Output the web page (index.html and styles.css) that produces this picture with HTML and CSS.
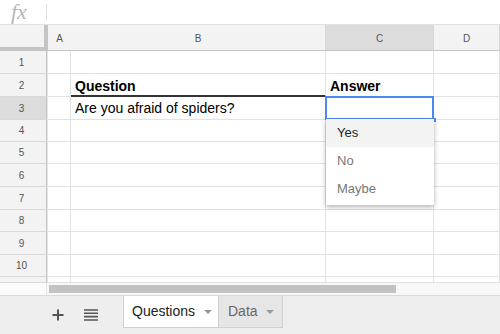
FILE: index.html
```html
<!DOCTYPE html>
<html lang="en">
<head>
  <meta charset="UTF-8">
  <title>Sheet</title>
  <link rel="stylesheet" href="styles.css">
</head>
<body>
  <div class="formula-bar">
    <span class="fx">fx</span>
    <span class="fx-sep"></span>
  </div>

  <div class="grid">
    <div class="corner"></div>
    <div class="col-head">A</div>
    <div class="col-head">B</div>
    <div class="col-head active">C</div>
    <div class="col-head">D</div>

    <div class="row-head">1</div>
    <div class="cell"></div><div class="cell"></div><div class="cell"></div><div class="cell"></div>

    <div class="row-head">2</div>
    <div class="cell"></div>
    <div class="cell bold underline">Question</div>
    <div class="cell bold">Answer</div>
    <div class="cell"></div>

    <div class="row-head active">3</div>
    <div class="cell"></div>
    <div class="cell">Are you afraid of spiders?</div>
    <div class="cell selected"><span class="handle"></span></div>
    <div class="cell"></div>

    <div class="row-head">4</div>
    <div class="cell"></div><div class="cell"></div><div class="cell"></div><div class="cell"></div>
    <div class="row-head">5</div>
    <div class="cell"></div><div class="cell"></div><div class="cell"></div><div class="cell"></div>
    <div class="row-head">6</div>
    <div class="cell"></div><div class="cell"></div><div class="cell"></div><div class="cell"></div>
    <div class="row-head">7</div>
    <div class="cell"></div><div class="cell"></div><div class="cell"></div><div class="cell"></div>
    <div class="row-head">8</div>
    <div class="cell"></div><div class="cell"></div><div class="cell"></div><div class="cell"></div>
    <div class="row-head">9</div>
    <div class="cell"></div><div class="cell"></div><div class="cell"></div><div class="cell"></div>
    <div class="row-head">10</div>
    <div class="cell"></div><div class="cell"></div><div class="cell"></div><div class="cell"></div>
    <div class="row-head"></div>
    <div class="cell"></div><div class="cell"></div><div class="cell"></div><div class="cell"></div>

    <ul class="dropdown">
      <li class="hover">Yes</li>
      <li>No</li>
      <li>Maybe</li>
    </ul>
  </div>

  <div class="hscroll">
    <div class="hscroll-corner"></div>
    <div class="hscroll-track"><div class="hscroll-thumb"></div></div>
  </div>

  <div class="tabs">
    <svg class="tab-icon" width="12" height="12" viewBox="0 0 12 12">
      <path d="M6 0.5v11M0.5 6h11" stroke="#555" stroke-width="2"/>
    </svg>
    <svg class="tab-icon menu" width="14" height="12" viewBox="0 0 14 12">
      <path d="M0 1h14M0 4.3h14M0 7.6h14M0 11h14" stroke="#555" stroke-width="1.6"/>
    </svg>
    <div class="tab current">Questions <span class="caret"></span></div>
    <div class="tab">Data <span class="caret"></span></div>
  </div>
</body>
</html>
```

FILE: styles.css
```css
body {
  margin: 0;
  width: 500px;
  height: 334px;
  overflow: hidden;
  background: #fff;
  font-family: Arial, 'Liberation Sans', sans-serif;
  color: #000;
}

.formula-bar {
  height: 24px;
  border-bottom: 1px solid #e2e2e2;
  display: flex;
  align-items: center;
  box-sizing: content-box;
}

.fx {
  font-family: 'Liberation Serif', 'DejaVu Serif', serif;
  font-style: italic;
  font-size: 22px;
  color: #b7b7b7;
  margin-left: 11px;
  width: 35px;
  line-height: 24px;
}

.fx-sep {
  width: 1px;
  height: 17px;
  background: #e0e0e0;
}

.grid {
  position: relative;
  display: grid;
  grid-template-columns: 47px 24px 255px 108px 66px;
  grid-template-rows: 26px 23px 23px 23px 22px 22px 23px 23px 22px 23px 22px 6px;
}

.corner {
  background: #f3f3f3;
  border-right: 4px solid #c4c4c4;
  border-bottom: 4px solid #c4c4c4;
  margin-right: -1px;
}

.col-head {
  background: #f3f3f3;
  border-right: 1px solid #d8d8d8;
  border-bottom: 1px solid #c6c6c6;
  font-size: 10px;
  color: #555;
  display: flex;
  align-items: center;
  justify-content: center;
  padding-top: 1px;
}

.col-head:nth-child(2) {
  margin-left: 1px;
  width: 23px;
}

.col-head.active {
  background: #dcdcdc;
}

.row-head {
  background: #f3f3f3;
  border-right: 1px solid #c6c6c6;
  box-shadow: 1px 0 0 #e4e4e4;
  border-bottom: 1px solid #d8d8d8;
  font-size: 10px;
  color: #555;
  display: flex;
  align-items: center;
  justify-content: center;
  padding-right: 3px;
}

.row-head.active {
  background: #dcdcdc;
}

.cell {
  border-right: 1px solid #e2e2e2;
  border-bottom: 1px solid #e2e2e2;
  font-size: 14px;
  line-height: 22px;
  padding-left: 4px;
  white-space: nowrap;
  position: relative;
}

.grid > .cell:nth-child(5n + 2) {
  margin-left: 1px;
}

.bold {
  font-weight: bold;
  line-height: 24px;
}

.underline {
  border-bottom: 2px solid #333;
}

.selected::after {
  content: '';
  position: absolute;
  left: -1px;
  top: -1px;
  right: -1px;
  bottom: -1px;
  border: 2px solid #4a89f3;
}

.handle {
  position: absolute;
  right: -3px;
  bottom: -3px;
  width: 4px;
  height: 4px;
  background: #4a89f3;
  z-index: 1;
}

.dropdown {
  position: absolute;
  left: 326px;
  top: 94px;
  width: 108px;
  margin: 0;
  padding: 0 0 2px;
  list-style: none;
  background: #fff;
  box-shadow: 0 2px 5px rgba(0, 0, 0, 0.3);
  z-index: 2;
}

.dropdown li {
  height: 28px;
  line-height: 28px;
  padding-left: 11px;
  font-size: 13px;
  color: #777;
}

.dropdown li.hover {
  background: #f3f3f3;
  color: #222;
}

.hscroll {
  display: flex;
  height: 12px;
}

.hscroll-corner {
  width: 46px;
  border-right: 1px solid #e4e4e4;
  background: #fbfbfb;
}

.hscroll-track {
  flex: 1;
  background: #f8f8f8;
  padding: 2px 0 2px 2px;
}

.hscroll-thumb {
  width: 347px;
  height: 8px;
  background: #c2c2c2;
}

.tabs {
  height: 39px;
  background: #eeeeee;
  border-top: 1px solid #dadada;
  display: flex;
  align-items: flex-start;
}

.tab-icon {
  margin-top: 13px;
  margin-left: 52px;
}

.tab-icon.menu {
  margin-left: 20px;
  margin-right: 25px;
}

.tab {
  height: 32px;
  box-sizing: border-box;
  padding: 0 8px 0 9px;
  font-size: 14px;
  line-height: 29px;
  color: #666;
  background: #e6e6e6;
  border-right: 1px solid #cfcfcf;
  border-bottom: 1px solid #cfcfcf;
  display: flex;
  align-items: center;
  gap: 8px;
}

.tab.current {
  background: #fff;
  color: #222;
  border-left: 1px solid #cfcfcf;
  width: 96px;
  padding-left: 8px;
  gap: 9px;
}

.caret {
  width: 0;
  height: 0;
  border-left: 4px solid transparent;
  border-right: 4px solid transparent;
  border-top: 4px solid #999;
}
```
